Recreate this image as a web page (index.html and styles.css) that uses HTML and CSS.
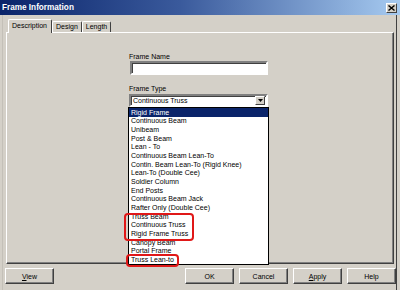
FILE: index.html
```html
<!DOCTYPE html>
<html lang="en">
<head>
  <meta charset="UTF-8" />
  <title>Frame Information</title>
  <link rel="stylesheet" href="styles.css">
</head>
<body>
  <div class="titlebar">
    <span class="title">Frame Information</span>
    <span class="close-btn">
      <svg width="7" height="6" viewBox="0 0 7 6"><path d="M0.5 0.5 L6.5 5.5 M6.5 0.5 L0.5 5.5" stroke="#000" stroke-width="1.4"/></svg>
    </span>
  </div>

  <div class="frame">
    <div class="tabs">
      <div class="tab active">Description</div>
      <div class="tab">Design</div>
      <div class="tab">Length</div>
    </div>

    <div class="panel">
      <div class="fields">
        <div class="label">Frame Name</div>
        <div class="textbox"></div>

        <div class="label type-label">Frame Type</div>
        <div class="combo-wrap">
          <div class="combo">
            <span class="combo-text">Continuous Truss</span>
            <span class="combo-btn">
              <svg width="5" height="3" viewBox="0 0 5 3"><path d="M0 0 H5 L2.5 3 Z" fill="#000"/></svg>
            </span>
          </div>
          <ul class="droplist">
            <li class="selected">Rigid Frame</li>
            <li>Continuous Beam</li>
            <li>Unibeam</li>
            <li>Post &amp; Beam</li>
            <li>Lean - To</li>
            <li>Continuous Beam Lean-To</li>
            <li>Contin. Beam Lean-To (Rigid Knee)</li>
            <li>Lean-To (Double Cee)</li>
            <li>Soldier Column</li>
            <li>End Posts</li>
            <li>Continuous Beam Jack</li>
            <li>Rafter Only (Double Cee)</li>
            <li>Truss Beam</li>
            <li>Continuous Truss</li>
            <li>Rigid Frame Truss</li>
            <li>Canopy Beam</li>
            <li>Portal Frame</li>
            <li>Truss Lean-to</li>
            <span class="mark mark-trusses"></span>
            <span class="mark mark-leanto"></span>
          </ul>
        </div>
      </div>
    </div>

    <div class="buttons">
      <button class="btn"><u>V</u>iew</button>
      <div class="btn-group">
        <button class="btn">OK</button>
        <button class="btn">Cancel</button>
        <button class="btn"><u>A</u>pply</button>
        <button class="btn">Help</button>
      </div>
    </div>
  </div>
</body>
</html>
```

FILE: styles.css
```css
body, html {
  margin: 0;
  padding: 0;
  width: 400px;
  height: 290px;
  overflow: hidden;
  font-family: "Liberation Sans", Arial, sans-serif;
  font-size: 7px;
  color: #000;
  background-color: #d4d0c8;
}

.titlebar {
  height: 15px;
  display: flex;
  align-items: center;
  justify-content: space-between;
  padding: 0 3px 0 2px;
  background: linear-gradient(90deg, #0a246a 0%, #3a5a9c 45%, #a6caf0 100%);
}

.title {
  color: #fff;
  font-weight: bold;
  font-size: 8.2px;
}

.close-btn {
  width: 9px;
  height: 8px;
  display: flex;
  align-items: center;
  justify-content: center;
  background: #d4d0c8;
  border: 1px solid;
  border-color: #fff #404040 #404040 #fff;
}

.frame {
  height: 275px;
  margin-right: 3px;
  border-left: 1px solid #c4c0b8;
  border-right: 1px solid #404040;
  margin-left: 2px;
  display: flex;
  flex-direction: column;
}

.tabs {
  display: flex;
  align-items: flex-end;
  height: 17px;
  padding-left: 5px;
}

.tab {
  height: 10px;
  line-height: 10px;
  padding: 0 3px;
  border-left: 1px solid #fff;
  border-top: 1px solid #fff;
  border-right: 1px solid #404040;
  border-radius: 2px 2px 0 0;
}

.tab.active {
  height: 13px;
  line-height: 12px;
  padding: 0 4px 0 3px;
  margin-bottom: -1px;
  background: #d4d0c8;
  position: relative;
  z-index: 1;
}

.panel {
  margin: 0 2px 0 3px;
  height: 230px;
  border: 1px solid;
  border-color: #fff #404040 #404040 #fff;
  box-shadow: inset -1px -1px 0 #808080;
}

.fields {
  padding: 19px 0 0 122px;
  width: 141px;
}

.label {
  height: 9px;
  line-height: 9px;
}

.type-label {
  margin-top: 9px;
}

.textbox {
  width: 134px;
  height: 10px;
  margin-left: 1px;
  background: #fff;
  border: 2px solid;
  border-color: #808080 #fff #fff #808080;
  box-shadow: inset 1px 1px 0 #404040;
}

.combo-wrap {
  position: relative;
  margin-top: 1px;
  width: 139px;
}

.combo {
  height: 9px;
  display: flex;
  align-items: center;
  justify-content: space-between;
  background: #fff;
  border: 2px solid;
  border-color: #808080 #fff #fff #808080;
  box-shadow: inset 1px 1px 0 #404040;
}

.combo-text {
  padding-left: 2px;
}

.combo-btn {
  width: 8px;
  height: 7px;
  margin-right: 1px;
  display: flex;
  align-items: center;
  justify-content: center;
  background: #d4d0c8;
  border: 1px solid;
  border-color: #fff #404040 #404040 #fff;
}

.droplist {
  position: absolute;
  top: 13px;
  left: -1px;
  width: 139px;
  height: 156px;
  margin: 0;
  padding: 0;
  list-style: none;
  background: #fff;
  border: 1px solid #000;
  display: grid;
  grid-template-rows: repeat(18, 1fr);
  z-index: 5;
}

.droplist li {
  padding-left: 2px;
  display: flex;
  align-items: center;
  white-space: nowrap;
}

.droplist li.selected {
  background: #0a246a;
  color: #fff;
}

.mark {
  position: absolute;
  border: 2px solid #e01818;
  border-radius: 4px;
  box-sizing: border-box;
}

.mark-trusses {
  left: -5px;
  top: 105px;
  width: 70px;
  height: 28px;
}

.mark-leanto {
  left: -3px;
  top: 146px;
  width: 53px;
  height: 13px;
}

.buttons {
  display: flex;
  justify-content: space-between;
  margin-top: 4px;
  padding: 0 0 0 2px;
}

.btn-group {
  display: flex;
  gap: 5px;
}

.btn {
  width: 49px;
  height: 16px;
  padding: 0;
  font-family: "Liberation Sans", Arial, sans-serif;
  font-size: 7px;
  color: #000;
  background: #d4d0c8;
  border: 1px solid;
  border-color: #fff #404040 #404040 #fff;
  box-shadow: inset -1px -1px 0 #808080;
}
```
